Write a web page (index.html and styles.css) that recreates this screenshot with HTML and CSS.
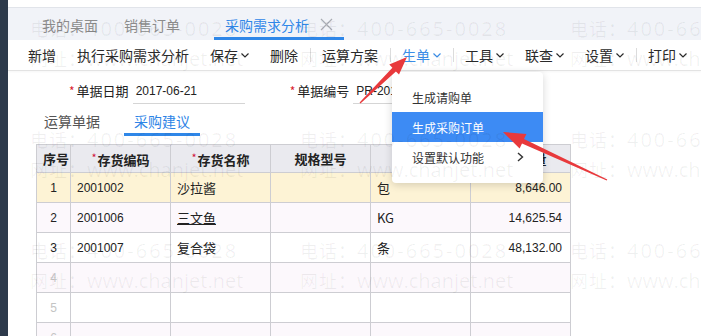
FILE: index.html
```html
<!DOCTYPE html>
<html lang="zh-CN">
<head>
    <meta charset="UTF-8">
    <meta name="viewport" content="width=device-width, initial-scale=1.0">
    <title>采购需求分析</title>
    <link rel="stylesheet" href="styles.css">
</head>
<body>

    <div class="app">
        <aside class="side"></aside>

        <div class="main">
            <div class="top-strip"></div>

            <!-- open documents -->
            <nav class="tabs">
                <span class="tab">我的桌面</span>
                <span class="tab">销售订单</span>
                <span class="tab active">采购需求分析
                    <svg class="close" width="13" height="13" viewBox="0 0 13 13"><path d="M1 1L12 12M12 1L1 12" stroke="#a9acb3" stroke-width="1.2" fill="none"/></svg>
                </span>
            </nav>

            <!-- toolbar -->
            <div class="toolbar">
                <span class="tool">新增</span>
                <span class="tool">执行采购需求分析</span>
                <span class="tool">保存<svg class="caret" width="8" height="5" viewBox="0 0 8 5"><path d="M0.5 0.5L4 4L7.5 0.5" stroke="currentColor" stroke-width="1.2" fill="none"/></svg></span>
                <span class="tool">删除</span>
                <span class="sep"></span>
                <span class="tool">运算方案</span>
                <span class="sep"></span>
                <span class="tool on">生单<svg class="caret" width="8" height="5" viewBox="0 0 8 5"><path d="M0.5 0.5L4 4L7.5 0.5" stroke="currentColor" stroke-width="1.2" fill="none"/></svg></span>
                <span class="sep"></span>
                <span class="tool">工具<svg class="caret" width="8" height="5" viewBox="0 0 8 5"><path d="M0.5 0.5L4 4L7.5 0.5" stroke="currentColor" stroke-width="1.2" fill="none"/></svg></span>
                <span class="tool">联查<svg class="caret" width="8" height="5" viewBox="0 0 8 5"><path d="M0.5 0.5L4 4L7.5 0.5" stroke="currentColor" stroke-width="1.2" fill="none"/></svg></span>
                <span class="tool">设置<svg class="caret" width="8" height="5" viewBox="0 0 8 5"><path d="M0.5 0.5L4 4L7.5 0.5" stroke="currentColor" stroke-width="1.2" fill="none"/></svg></span>
                <span class="sep"></span>
                <span class="tool">打印<svg class="caret" width="8" height="5" viewBox="0 0 8 5"><path d="M0.5 0.5L4 4L7.5 0.5" stroke="currentColor" stroke-width="1.2" fill="none"/></svg></span>
            </div>

            <!-- header fields -->
            <div class="form-row">
                <div class="field">
                    <span class="req">*</span>
                    <span class="label">单据日期</span>
                    <span class="input">2017-06-21</span>
                </div>
                <div class="field">
                    <span class="req">*</span>
                    <span class="label">单据编号</span>
                    <span class="input">PR-2017-0001</span>
                </div>
            </div>

            <div class="subtabs">
                <span class="subtab">运算单据</span>
                <span class="subtab active">采购建议</span>
            </div>

            <table class="grid">
                <colgroup>
                    <col class="c-no">
                    <col class="c-wide">
                    <col class="c-wide">
                    <col class="c-wide">
                    <col class="c-wide">
                    <col class="c-wide">
                </colgroup>
                <thead>
                    <tr>
                        <th>序号</th>
                        <th><i class="star">*</i>存货编码</th>
                        <th><i class="star">*</i>存货名称</th>
                        <th>规格型号</th>
                        <th>计量单位</th>
                        <th>建议数量</th>
                    </tr>
                </thead>
                <tbody>
                    <tr class="current">
                        <td class="no">1</td><td>2001002</td><td>沙拉酱</td><td></td><td>包</td><td class="num">8,646.00</td>
                    </tr>
                    <tr>
                        <td class="no">2</td><td>2001006</td><td><u>三文鱼</u></td><td></td><td>KG</td><td class="num">14,625.54</td>
                    </tr>
                    <tr>
                        <td class="no">3</td><td>2001007</td><td>复合袋</td><td></td><td>条</td><td class="num">48,132.00</td>
                    </tr>
                    <tr>
                        <td class="no empty">4</td><td></td><td></td><td></td><td></td><td></td>
                    </tr>
                    <tr>
                        <td class="no empty">5</td><td></td><td></td><td></td><td></td><td></td>
                    </tr>
                    <tr>
                        <td class="no empty">6</td><td></td><td></td><td></td><td></td><td></td>
                    </tr>
                </tbody>
            </table>
        </div>
    </div>

    <!-- 生单 dropdown -->
    <div class="menu">
        <div class="menu-item">生成请购单</div>
        <div class="menu-item active">生成采购订单</div>
        <div class="menu-item">设置默认功能
            <svg class="chev" width="7" height="10" viewBox="0 0 7 10"><path d="M1 1L5.5 5L1 9" stroke="#333" stroke-width="1.4" fill="none"/></svg>
        </div>
    </div>

    <!-- watermark -->
    <div class="watermark">
        <div class="mark"><p><b>电话：</b><span class="tel">400-665-0028</span></p><p><b>网址：</b>www.chanjet.net</p></div>
        <div class="mark"><p><b>电话：</b><span class="tel">400-665-0028</span></p><p><b>网址：</b>www.chanjet.net</p></div>
        <div class="mark"><p><b>电话：</b><span class="tel">400-665-0028</span></p><p><b>网址：</b>www.chanjet.net</p></div>
        <div class="mark"><p><b>电话：</b><span class="tel">400-665-0028</span></p><p><b>网址：</b>www.chanjet.net</p></div>
        <div class="mark"><p><b>电话：</b><span class="tel">400-665-0028</span></p><p><b>网址：</b>www.chanjet.net</p></div>
        <div class="mark"><p><b>电话：</b><span class="tel">400-665-0028</span></p><p><b>网址：</b>www.chanjet.net</p></div>
        <div class="mark"><p><b>电话：</b><span class="tel">400-665-0028</span></p><p><b>网址：</b>www.chanjet.net</p></div>
        <div class="mark"><p><b>电话：</b><span class="tel">400-665-0028</span></p><p><b>网址：</b>www.chanjet.net</p></div>
        <div class="mark"><p><b>电话：</b><span class="tel">400-665-0028</span></p><p><b>网址：</b>www.chanjet.net</p></div>
    </div>

    <!-- annotation arrows -->
    <svg class="arrows" width="701" height="336" viewBox="0 0 701 336">
        <polygon points="360.4,103.4 395.9,71.4 399,74.6 407,57 389.3,64.6 392.4,67.8 359.6,102.6" fill="#e8393c"/>
        <polygon points="607.3,179.5 524,138.9 526.4,133.9 503,132 519.6,148.5 522,143.5 606.7,180.5" fill="#e8393c"/>
    </svg>

</body>
</html>
```

FILE: styles.css
```css
body {
    margin: 0;
    font-family: "Noto Sans CJK SC", sans-serif;
    color: #222;
    background: #fff;
}
.app {
    display: flex;
    height: 336px;
    overflow: hidden;
}
.side {
    width: 8px;
    flex: none;
    background: #2d3a4b;
}
.main {
    flex: 1;
    min-width: 0;
}
.top-strip {
    height: 7px;
    border-bottom: 1px solid #e1e4ea;
}

/* document tabs */
.tabs {
    height: 32px;
    display: flex;
    padding-left: 23px;
    background: #f1f3f8;
    box-sizing: border-box;
}
.tab {
    display: flex;
    align-items: center;
    padding: 4px 11px 0;
    font-size: 14px;
    line-height: 16px;
    color: #8c8c8c;
    border-bottom: 3px solid transparent;
}
.tab + .tab {
    margin-left: 4px;
}
.tab.active {
    margin-left: 23px;
    color: #2f87e8;
    border-bottom-color: #2f87e8;
}
.close {
    margin-left: 11px;
}

/* toolbar */
.toolbar {
    height: 30px;
    display: flex;
    align-items: center;
    padding-left: 9.5px;
    border-bottom: 1px solid #e3e3e3;
    box-shadow: 0 1px 2px rgba(0, 0, 0, 0.04);
}
.tool {
    display: flex;
    align-items: center;
    padding: 0 10.5px;
    font-size: 14px;
    line-height: 16px;
    color: #2a2a2a;
}
.tool.on {
    color: #3a8ee8;
}
.caret {
    margin-left: 3px;
}
.sep {
    width: 1px;
    height: 14px;
    margin: 0 1px;
    background: #dcdcdc;
}

/* header fields */
.form-row {
    display: flex;
    height: 34px;
    padding: 6px 0 0 61px;
    box-sizing: border-box;
}
.field {
    display: flex;
    align-items: center;
    height: 27px;
}
.field + .field {
    margin-left: 45px;
}
.req {
    color: #d9232d;
    font-size: 12px;
    margin-right: 2px;
}
.label {
    font-size: 13px;
    line-height: 16px;
}
.input {
    width: 112px;
    height: 26px;
    margin-left: 4px;
    padding-left: 3px;
    box-sizing: border-box;
    border-bottom: 1px solid #d5d5d5;
    font-family: "Liberation Sans", sans-serif;
    font-size: 12px;
    line-height: 26px;
    white-space: nowrap;
    overflow: hidden;
}

/* sub tabs */
.subtabs {
    display: flex;
    gap: 14px;
    height: 31px;
    padding-left: 26px;
}
.subtab {
    display: flex;
    align-items: center;
    padding: 3px 10px 0;
    font-size: 14px;
    line-height: 16px;
    color: #555;
    border-bottom: 3px solid transparent;
}
.subtab.active {
    color: #2d84e6;
    border-bottom-color: #2f87e8;
}

/* detail grid */
.grid {
    margin: 8px 0 0 28px;
    width: 534px;
    table-layout: fixed;
    border-collapse: collapse;
    font-size: 12px;
}
.c-no {
    width: 34px;
}
.c-wide {
    width: 100px;
}
.grid th,
.grid td {
    border: 1px solid #cdcdd2;
    padding: 0 6px;
    white-space: nowrap;
    overflow: hidden;
}
.grid th {
    height: 27px;
    background: #eaeaef;
    font-size: 13px;
    font-weight: bold;
    text-align: center;
}
.grid td {
    height: 29px;
    font-family: "Liberation Sans", "Noto Sans CJK SC", sans-serif;
    font-size: 12px;
}
.grid td:nth-child(3),
.grid td:nth-child(5) {
    font-family: "Noto Sans CJK SC", sans-serif;
    font-size: 13px;
}
.star {
    font-style: normal;
    font-weight: normal;
    color: #d0103a;
    font-size: 11px;
    vertical-align: 3px;
    margin-right: 1px;
}
.grid tbody tr:nth-child(even) {
    background: #fcf8fc;
}
.grid tr.current {
    background: #fdf3d5;
}
.grid td.no {
    padding: 0;
    text-align: center;
}
.grid td.empty {
    color: #c4c4c4;
}
.grid td.num {
    text-align: right;
    padding-right: 8px;
}

/* dropdown of 生单 */
.menu {
    position: absolute;
    left: 392px;
    top: 72px;
    width: 151px;
    padding: 10px 0 11px;
    background: #fff;
    border-radius: 4px;
    box-shadow: 0 2px 8px rgba(0, 0, 0, 0.16);
    z-index: 1;
}
.menu-item {
    display: flex;
    align-items: center;
    height: 30px;
    padding-left: 20px;
    font-size: 12px;
    color: #333;
}
.menu-item.active {
    background: #3d8bf4;
    color: #fff;
}
.chev {
    margin-left: auto;
    margin-right: 19px;
}

/* watermark */
.watermark {
    position: absolute;
    left: 0;
    top: 0;
    width: 701px;
    height: 336px;
    overflow: hidden;
    display: grid;
    grid-template-columns: repeat(3, 270px);
    grid-auto-rows: 111px;
    padding: 14px 0 0 30px;
    box-sizing: border-box;
    pointer-events: none;
    z-index: 2;
}
.mark {
    font-family: "Open Sans", "Noto Sans CJK SC", sans-serif;
    font-size: 20px;
    line-height: 29px;
    color: rgba(0, 0, 0, 0.06);
    white-space: nowrap;
}
.mark p {
    margin: 0;
}
.mark b {
    font-weight: normal;
    font-size: 18px;
    letter-spacing: 1px;
}
.mark .tel {
    letter-spacing: 2px;
}

.arrows {
    position: absolute;
    left: 0;
    top: 0;
    pointer-events: none;
    z-index: 3;
}
```
